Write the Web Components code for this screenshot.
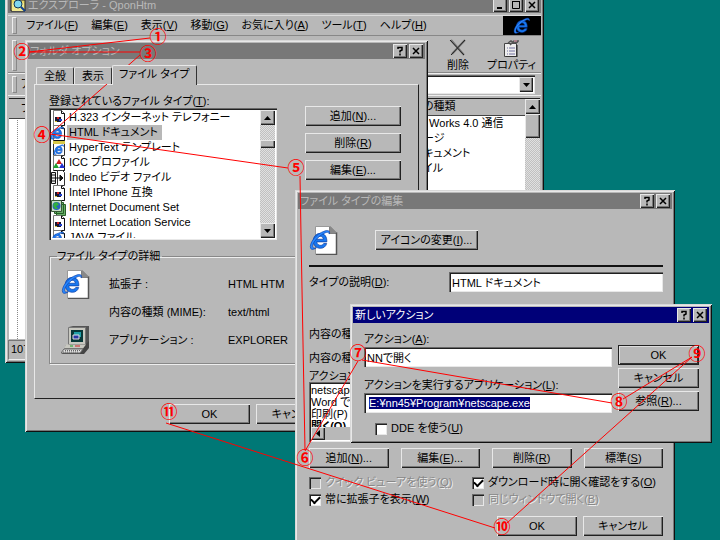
<!DOCTYPE html>
<html lang="ja">
<head>
<meta charset="utf-8">
<title>フォルダ オプション</title>
<style>
html,body{margin:0;height:100%}
body{background:#007876;overflow:hidden;color:#000;font:11px/15px "Liberation Sans","Noto Sans CJK JP",sans-serif;font-feature-settings:"palt"}
</style>
</head>
<body>
<desk-top></desk-top>
<script>
const RAISED='box-shadow:inset 1px 1px #e8e8e8,inset -1px -1px #202020,inset -2px -2px #787878;';
const SUNK='box-shadow:inset 1px 1px #686868,inset 2px 2px #202020,inset -1px -1px #e8e8e8;';
const BASE='*{box-sizing:border-box}:host{box-sizing:border-box}button,input{font:inherit;color:inherit;font-feature-settings:inherit;border:0;border-radius:0;margin:0;padding:0;outline:0}u{text-underline-offset:1px}';
function define(name,html,setup){
  const t=document.createElement('template');
  t.innerHTML=html.replace('<style>','<style>'+BASE);
  customElements.define(name,class extends HTMLElement{
    constructor(){super();this.attachShadow({mode:'open'})}
    connectedCallback(){
      if(this.shadowRoot.childNodes.length)return;
      this.shadowRoot.append(t.content.cloneNode(true));
      if(setup)setup(this,this.shadowRoot);
    }
  });
}
const E=(x,y,s)=>`<g transform="translate(${x} ${y}) scale(${s})"><path d="M15.5 11.2H6.7c.3 2 1.6 3 3.3 3 1.3 0 2.3-.6 2.8-1.6h2.6C14.600 15.300 12.600 16.800 9.900 16.800 6.200 16.800 3.700 14 3.700 10.300S6.300 3.800 9.800 3.800c3.700 0 6 2.900 5.700 7.400zM6.800 8.900h5.700C12.300 7.300 11.300 6.400 9.700 6.400S7.100 7.300 6.800 8.900z" fill="#1878f0" stroke="#0838a0" stroke-width=".6"/><path d="M1.500 17C-.5 13 6 4 14 1.600c3-.9 4.500.2 3.700 2.800C17.300 2.800 16 2.500 14 3.400 8 6 2.800 12 3.200 15.400c.2 1.300 1.500 1.500 3.300.9-2 1.500-4.200 2-5 .7z" fill="#2888ff" stroke="#0838a0" stroke-width=".5"/></g>`;
const PAGE='<path d="M2.500.5h8l3 3v12h-11z" fill="#fff" stroke="#777"/><path d="M10.500.5v3h3v12h-11" fill="none" stroke="#111"/>';
const ICONS={
  flag:[16,PAGE+'<path d="M4 7h6v5H4z" fill="#181830"/><path d="M6 7h2v2H6z" fill="#d02020"/><path d="M8 9h3v2H8z" fill="#2040d0"/><path d="M4 11h2v1H4z" fill="#d8c030"/>'],
  html:[16,PAGE+E(-1,1,.75)],
  template:[16,'<path d="M2.500 1.500h11v14h-11z" fill="#fff" stroke="#333"/><path d="M2 1h12v3H2z" fill="#d8c848"/>'+E(2,4,.6)],
  icc:[16,PAGE+'<path d="M8 4l3 5H5z" fill="#d02020"/><path d="M5 8l3 5H2z" fill="#20a030"/><path d="M11 8l3 5H8z" fill="#2030d0"/>'],
  video:[16,'<path d="M.5 2.500h4v11h-4z" fill="#eee" stroke="#111"/><path d="M1 5h3M1 8h3M1 11h3" stroke="#111"/><path d="M6.500.5h5l2 2v13h-7z" fill="#fff" stroke="#333"/><path d="M5 8h4M9 5l3 3-3 3z" fill="#111" stroke="#111"/>'],
  docset:[16,'<path d="M5.500 4.500h9v11h-9zM3.500 2.500h9v11h-9z" fill="#68b068" stroke="#286028"/><path d="M.5.5h10v11H.5z" fill="#c8e0c8" stroke="#385838"/><circle cx="5.500" cy="6" r="4" fill="#2860c0"/><path d="M3 3l3-1 2 3-3 1 2 3H4L2 6z" fill="#30b040"/>'],
  bigpage:[30,'<path d="M6.500 1.500h15l6 6v22h-21z" fill="#fff" stroke="#999"/><path d="M21 2v6h6.500v21.500H7" fill="none" stroke="#555" stroke-width="1.500"/><path d="M21 1l7 7h-7z" fill="#888"/>'+E(0,4,1.15)],
  computer:[30,'<path d="M8 2l4-1h16v17l-4 3H8z" fill="#555"/><path d="M7.500 2.500h17v17h-17z" fill="#c8c8c0" stroke="#777"/><path d="M10 5h12v12H10z" fill="#083838"/><path d="M13 7h7v5h-7z" fill="#20a0a8"/><path d="M12 10h6v4h-6z" fill="#2838a8" stroke="#e0e0e0"/><path d="M5 20h19l4-4v7l-5 6H1z" fill="#444"/><path d="M5 19.500h20l-3 4H3z" fill="#c8c8c0"/><path d="M9 21h3" stroke="#20a020"/><path d="M14 21h5" stroke="#d02020"/><path d="M3 24h19l-3 4H0z" fill="#ddd" stroke="#666"/><path d="M4 25.500h16M2 27h16" stroke="#666" stroke-dasharray="1 1"/>'],
  find:[16,'<path d="M1 1h5l1 2h8v11H1z" fill="#e8d868" stroke="#222"/><path d="M2 6h12v8H2z" fill="#f0e890"/><circle cx="8" cy="7" r="4" fill="#80d8f0" stroke="#103858"/><path d="M11 10l4 4" stroke="#104090" stroke-width="2"/>'],
  cut:[18,'<path d="M2 1l13 15M16 1L3 15" stroke="#777" stroke-width="2"/><path d="M1 1l14 15M16 1L2 16" stroke="#222"/>'],
  props:[18,'<path d="M2.500 4.500h12v13h-12z" fill="#eee" stroke="#444"/><path d="M15 6v12H4" fill="none" stroke="#222"/><path d="M5 9h1m1 0h6M5 12h1m1 0h6M5 15h1m1 0h6" stroke="#7070a0"/><path d="M6 4l3-2 3 2 4-1M8 6l4-4h5" fill="none" stroke="#555" stroke-width="1.500"/><path d="M12 2h3" stroke="#e898b0"/>'],
  logo:[18,E(0,0,.92)]
};
define('win-icon','<style>:host{display:inline-flex;flex:none}span{display:flex}</style><span></span>',(h,r)=>{
  const [s,d]=ICONS[h.getAttribute('name')];
  r.querySelector('span').innerHTML=`<svg aria-hidden="true" width="${s}" height="${s}" viewBox="0 0 ${s} ${s}">${d}</svg>`;
});
define('win-button',`<style>:host{display:block}button{width:100%;height:100%;min-height:20px;background:#b8b8b8;${RAISED}}:host([default]) button{box-shadow:inset 0 0 0 1px #222,inset 2px 2px #ddd,inset -2px -2px #333}</style><button><slot></slot></button>`);
define('win-frame',`<style>
:host{display:flex;flex-direction:column;background:#b8b8b8;padding:3px;box-shadow:inset 1px 1px #d8d8d8,inset -1px -1px #101010,inset 2px 2px #e8e8e8,inset -2px -2px #787878}
header{display:flex;align-items:center;height:16px;flex:none;background:#787878;color:#b8b8b8;padding:0 2px;gap:2px}
:host([active]) header{background:#000078;color:#fff}
h2{font:inherit;margin:0;flex:1;white-space:nowrap;display:flex;align-items:center;gap:2px}
button{width:14px;height:14px;background:#b8b8b8;color:#000;display:grid;place-items:center;${RAISED}}
.min,.max{display:none}:host([sizable]) .min,:host([sizable]) .max{display:grid}:host([sizable]) .help{display:none}
svg{display:block}
</style><header><h2><slot name="icon"></slot><span></span></h2>
<button class="min" aria-label="最小化"><svg width="14" height="14"><path d="M4 10h5" stroke="#000" stroke-width="2"/></svg></button>
<button class="max" aria-label="最大化"><svg width="14" height="14"><path d="M3 3.500h8M3.500 3v7.500h7V3" fill="none" stroke="#000"/></svg></button>
<button class="help" aria-label="ヘルプ"><svg width="14" height="14"><path d="M5 5V3.500h4V6L7 7v1.500M7 9.500v2" fill="none" stroke="#000" stroke-width="1.500"/></svg></button>
<button aria-label="閉じる"><svg width="14" height="14"><path d="M4 4l6 6M10 4l-6 6" stroke="#000" stroke-width="1.500"/></svg></button></header><slot></slot>`,
(h,r)=>r.querySelector('h2 span').textContent=h.getAttribute('caption'));
define('win-scroll',`<style>
:host{display:flex;flex-direction:column;width:15px;flex:none;background:repeating-conic-gradient(#c0c0c0 0 25%,#e0e0e0 0 50%) 0 0/2px 2px}
button{width:100%;height:15px;flex:none;background:#b8b8b8;display:grid;place-items:center;${RAISED}}
.space{flex:1}.thumb{margin-top:var(--thumb-top,0);height:var(--thumb-size,24px);background:#b8b8b8;${RAISED}}
</style><button aria-label="上へ"><svg width="7" height="4"><path d="M0 4h7L3.500 0z"/></svg></button><div class="thumb"></div><div class="space"></div><button aria-label="下へ"><svg width="7" height="4"><path d="M0 0h7L3.500 4z"/></svg></button>`);
define('win-field',`<style>
:host{display:flex;flex-direction:column}
:host([inline]){flex-direction:row;align-items:center}:host([inline]) label{flex:0 0 140px}:host([inline]) input{flex:1;min-width:0}
input{width:100%;height:20px;padding:0 3px;background:#fff;${SUNK}}:host([selected]) input{padding-left:5px}
input::selection{background:#000078;color:#fff}
</style><label for="f"><slot></slot></label><input id="f">`,
(h,r)=>{const i=r.querySelector('input');i.value=h.getAttribute('value');if(h.hasAttribute('selected')){i.focus({preventScroll:true});i.select()}});
define('win-check',`<style>
:host{display:block;white-space:nowrap}label{display:flex;align-items:center;gap:4px}
input{appearance:none;width:12px;height:12px;flex:none;background:#fff;display:grid;place-items:center;${SUNK}}
input:checked::after{content:"";width:7px;height:4px;border:solid #000;border-width:0 0 2px 2px;rotate:-45deg;margin-bottom:2px}
:host([disabled]) label{color:#888;text-shadow:1px 1px #eee}:host([disabled]) input{background:#b8b8b8}
</style><label><input type="checkbox"><span><slot></slot></span></label>`,
(h,r)=>{const i=r.querySelector('input');i.checked=h.hasAttribute('checked');i.disabled=h.hasAttribute('disabled')});
define('win-item',`<style>:host{display:flex;align-items:center;height:15px;white-space:nowrap}span{padding:0 4px 0 2px}:host([selected]) span{background:#b8b8b8}</style><slot name="icon"></slot><span><slot></slot></span>`);

define('explorer-window',`<style>
:host{display:block}win-frame{height:100%}
nav{display:flex;height:21px;margin-top:2px;border:solid;border-width:1px 0;border-color:#ddd #eee #888;padding-left:4px}
nav::before,.tools::before,.address::before{content:"";width:3px;border:1px solid;border-color:#eee #888 #888 #eee;margin:1px 9px 1px 0}
nav button{background:none;margin-right:13px;white-space:nowrap}
.logo{margin-left:auto;width:38px;background:#000;display:grid;place-items:center}
.tools{display:flex;height:37px;border-bottom:1px solid #888;padding:3px 5px 0 4px}
.tools button{background:none;display:flex;flex-direction:column;align-items:center;justify-content:space-between;line-height:14px}
.tools .first{margin-left:auto;margin-right:18px}
.address{display:flex;align-items:center;height:23px;padding:1px 6px 1px 4px;border-top:1px solid #eee;border-bottom:1px solid #eee}
.address::before{align-self:stretch;margin-right:4px}
.address span{width:20px;flex:none}
.combo{flex:1;display:flex;height:19px;background:#fff;padding:2px;${SUNK}}.combo button{width:14px;margin-left:auto;background:#b8b8b8;display:grid;place-items:center;${RAISED}}
.panes{flex:1;min-height:0;display:flex;gap:2px;margin:2px 1px 1px}
.tree{width:180px;background:linear-gradient(90deg,#aaa 1px,#0000 0) 8px 20px/1px no-repeat,#fff}
.tree{background:repeating-linear-gradient(#888 0 1px,#fff 1px 2px) 8px 0/1px 100% no-repeat,#fff}
.head{height:21px;background:#b8b8b8;border-top:1px solid #222;border-bottom:1px solid #444;padding:2px 0 0 12px}
.files{flex:1;display:flex;background:#fff;border-top:1px solid #222}
.list{flex:1}.list .head{padding-left:232px;border-top:0;height:17px;padding-top:0}
ul{list-style:none;margin:0;padding:0 0 0 232px}li{height:15px;white-space:nowrap}
.status{height:20px;padding:1px 2px;border:1px solid;border-color:#777 #eee #eee #777}
</style>
<win-frame sizable caption="エクスプローラ - QponHtm"><win-icon slot="icon" name="find"></win-icon>
<nav><button>ファイル(<u>F</u>)</button><button>編集(<u>E</u>)</button><button>表示(<u>V</u>)</button><button>移動(<u>G</u>)</button><button>お気に入り(<u>A</u>)</button><button>ツール(<u>T</u>)</button><button>ヘルプ(<u>H</u>)</button><div class="logo"><win-icon name="logo"></win-icon></div></nav>
<div class="tools"><button class="first"><win-icon name="cut"></win-icon>削除</button><button><win-icon name="props"></win-icon>プロパティ</button></div>
<div class="address"><span>ア</span><div class="combo"><button aria-label="アドレス一覧"><svg width="7" height="4"><path d="M0 0h7L3.500 4z"/></svg></button></div></div>
<div class="panes"><div class="tree"><div class="head">フ</div></div><div class="files"><div class="list"><div class="head">の種類</div><ul><li>t Works 4.0 通信</li><li>ージ</li><li>キュメント</li><li>イル</li></ul></div><win-scroll></win-scroll></div></div>
<div class="status">107</div></win-frame>`);

define('options-window',`<style>
:host{display:block}win-frame{height:100%}
main{flex:1;display:flex;flex-direction:column;padding:6px 6px 5px}
.tabs{display:flex;align-items:end;padding-left:2px;z-index:1}
.tabs button{height:17px;padding:0 7px;background:#b8b8b8;border:solid;border-width:1px 1px 0;border-color:#e8e8e8 #333 #e8e8e8 #e8e8e8;border-radius:2px 2px 0 0;white-space:nowrap}
.tabs .on{height:20px;padding:0 6px 2px;margin-bottom:-1px}
.panel{flex:1;padding:9px 10px 0 14px;border:1px solid;border-color:#e8e8e8 #222 #222 #e8e8e8}
.top{display:flex;gap:28px}.types{flex:1}.types p{margin:0 0 -1px}
.box{display:flex;height:132px;background:#fff;padding:2px;overflow:hidden;${SUNK}}
.rows{flex:1;overflow:hidden;min-width:0}
.box win-scroll{--thumb-top:15px;--thumb-size:8px}
.side{width:96px;display:flex;flex-direction:column;gap:7px;margin:12px 7px 0 0}
fieldset{margin:9px 0 0;border:1px solid #888;box-shadow:inset 1px 1px #eee,1px 1px #eee;padding:6px 11px 7px;height:115px}
legend{padding:0 2px 0 0;margin-left:-4px}
dl{margin:0;display:grid;grid-template-columns:48px 119px 1fr;grid-auto-rows:28px;align-items:center}
dt,dd{margin:0;white-space:nowrap}dt{grid-column:2}dd{grid-column:3}win-icon{grid-column:1}
footer{display:flex;gap:6px;margin:5px 0 0 135px}footer win-button{width:81px;flex:none}
</style>
<win-frame caption="フォルダ オプション"><main>
<div class="tabs"><button>全般</button><button>表示</button><button class="on">ファイル タイプ</button></div>
<div class="panel"><div class="top"><div class="types"><p>登録されているファイル タイプ(<u>T</u>):</p>
<div class="box"><div class="rows">
<win-item><win-icon slot="icon" name="flag"></win-icon>H.323 インターネット テレフォニー</win-item>
<win-item selected><win-icon slot="icon" name="html"></win-icon>HTML ドキュメント</win-item>
<win-item><win-icon slot="icon" name="template"></win-icon>HyperText テンプレート</win-item>
<win-item><win-icon slot="icon" name="icc"></win-icon>ICC プロファイル</win-item>
<win-item><win-icon slot="icon" name="video"></win-icon>Indeo ビデオ ファイル</win-item>
<win-item><win-icon slot="icon" name="flag"></win-icon>Intel IPhone 互換</win-item>
<win-item><win-icon slot="icon" name="docset"></win-icon>Internet Document Set</win-item>
<win-item><win-icon slot="icon" name="flag"></win-icon>Internet Location Service</win-item>
<win-item><win-icon slot="icon" name="html"></win-icon>JAVA ファイル</win-item>
</div><win-scroll></win-scroll></div></div>
<div class="side"><win-button>追加(<u>N</u>)...</win-button><win-button>削除(<u>R</u>)</win-button><win-button>編集(<u>E</u>)...</win-button></div></div>
<fieldset><legend>ファイル タイプの詳細</legend><dl><win-icon name="bigpage"></win-icon><dt>拡張子 :</dt><dd>HTML HTM</dd><dt>内容の種類 (MIME):</dt><dd>text/html</dd><win-icon name="computer"></win-icon><dt>アプリケーション :</dt><dd>EXPLORER</dd></dl></fieldset></div>
<footer><win-button>OK</win-button><win-button>キャンセル</win-button></footer>
</main></win-frame>`);

define('edit-window',`<style>
:host{display:block}win-frame{height:100%}
main{flex:1;padding:16px 9px 0 11px}
.top{display:flex;align-items:center;gap:36px;padding-bottom:10px;border-bottom:2px solid #111;margin-bottom:5px}
.top win-button{width:103px}
.mid{display:grid;grid-template-rows:24px 24px 12px;margin-top:30px;align-items:center}
.acts{height:60px;background:#fff;padding:2px;display:flex;flex-direction:column;${SUNK}}
ul{list-style:none;margin:0;padding:0;flex:1;min-height:0;overflow:hidden;line-height:12px}
li:last-child{font-weight:bold}
.bar{height:13px;flex:none;background:#b8b8b8}.bar button{width:14px;height:13px;background:#b8b8b8;display:grid;place-items:center;${RAISED}}
.row{display:grid;grid-template-columns:repeat(4,1fr);gap:12px;margin-top:6px}
.checks{display:grid;grid-template-columns:163px 1fr;grid-auto-rows:17px;margin-top:6px;align-items:center}
footer{display:flex;justify-content:flex-end;gap:6px;margin-top:8px}footer win-button{width:80px}
</style>
<win-frame caption="ファイル タイプの編集"><main>
<div class="top"><win-icon name="bigpage"></win-icon><win-button>アイコンの変更(<u>I</u>)...</win-button></div>
<win-field inline value="HTML ドキュメント">タイプの説明(<u>D</u>):</win-field>
<div class="mid"><span>内容の種</span><span>内容の種</span><span>アクション</span></div>
<div class="acts"><ul><li>netscape</li><li>Word で開</li><li>印刷(P)</li><li>開く(O)</li></ul><div class="bar"><button aria-label="左へ"><svg width="4" height="7"><path d="M4 0v7L0 3.500z"/></svg></button></div></div>
<div class="row"><win-button>追加(<u>N</u>)...</win-button><win-button>編集(<u>E</u>)...</win-button><win-button>削除(<u>R</u>)</win-button><win-button>標準(<u>S</u>)</win-button></div>
<div class="checks"><win-check disabled>クイック ビューアを使う(<u>Q</u>)</win-check><win-check checked>ダウンロード時に開く確認をする(<u>O</u>)</win-check><win-check checked>常に拡張子を表示(<u>W</u>)</win-check><win-check disabled>同じウィンドウで開く(<u>B</u>)</win-check></div>
<footer><win-button>OK</win-button><win-button>キャンセル</win-button></footer>
</main></win-frame>`);

define('action-window',`<style>
:host{display:block}win-frame{height:100%}
main{flex:1;display:flex;gap:6px;padding:9px 10px 0 11px}
.form{flex:1;display:flex;flex-direction:column;gap:11px}
.form win-check{margin:-3px 0 0 11px}
.side{width:81px;display:flex;flex-direction:column;gap:3px;padding-top:13px}
</style>
<win-frame active caption="新しいアクション"><main>
<div class="form"><win-field value="NNで開く">アクション(<u>A</u>):</win-field><win-field selected value="E:¥nn45¥Program¥netscape.exe">アクションを実行するアプリケーション(<u>L</u>):</win-field><win-check>DDE を使う(<u>U</u>)</win-check></div>
<div class="side"><win-button default>OK</win-button><win-button>キャンセル</win-button><win-button>参照(<u>R</u>)...</win-button></div>
</main></win-frame>`);

define('step-marks',`<style>:host{display:block;pointer-events:none}svg{display:block}path{fill:none;stroke:#f00}text{fill:#f00;font:bold 17px "Noto Sans CJK JP",sans-serif;text-anchor:middle}</style>
<svg width="720" height="540"><path d="M150 38L29 52H140M140 55L50 134L288 168M300 176L301 235L305 450M305 451L358 361M362 360L612 403M623 399L692 357L507 523M166 423L495 528"/></svg>`,
(h,r)=>{
  const pts=[[158,37],[22,52],[148,54],[42,135],[296,168],[305,458],[358,353],[619,402],[697,354],[502,527],[169,412]];
  r.querySelector('svg').insertAdjacentHTML('beforeend',pts.map(([x,y],i)=>`<text x="${x}" y="${y+6}">${String.fromCodePoint(0x2460+i)}</text>`).join(''));
});
define('desk-top',`<style>
:host{display:block;position:relative;min-height:100vh;overflow:hidden}
explorer-window,options-window,edit-window,action-window,step-marks{position:absolute}
explorer-window{left:5px;top:-6px;width:539px;height:369px}
options-window{left:25px;top:40px;width:403px;height:392px}
edit-window{left:295px;top:190px;width:380px;height:360px}
action-window{left:350px;top:304px;width:362px;height:139px}
step-marks{left:0;top:0}
</style><explorer-window></explorer-window><options-window></options-window><edit-window></edit-window><action-window></action-window><step-marks></step-marks>`);
</script>
</body>
</html>
